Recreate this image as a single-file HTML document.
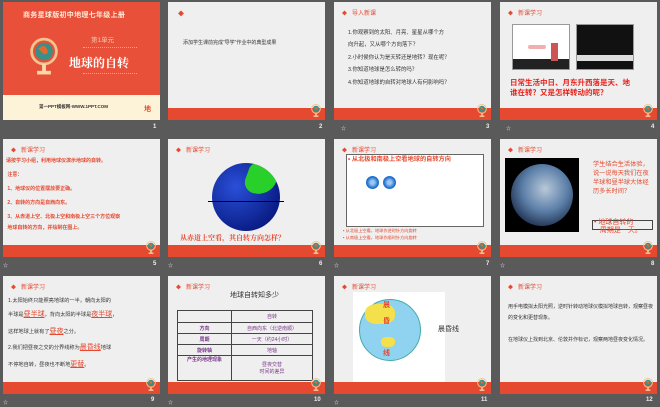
<!DOCTYPE html>
<html><head><meta charset="utf-8"><style>
*{margin:0;padding:0;box-sizing:border-box}
body{width:660px;height:407px;background:#5a5a5a;position:relative;overflow:hidden;font-family:"Liberation Sans","Noto Sans CJK SC",sans-serif}
.s{position:absolute;width:157px;height:118px;background:#efefef;overflow:hidden}
.f{position:absolute;left:0;right:0;bottom:0;height:12px;background:#e5492f}
.h{position:absolute;left:8px;top:6px;font-size:6px;color:#e5492f}
.h:before{content:"◆";margin-right:5px;font-size:5px}
.n{position:absolute;color:#eee;font-size:6px;font-weight:bold}
.t{position:absolute;font-size:5.5px;line-height:1.9}
.g{position:absolute;right:4px;bottom:3px}
.st{position:absolute;color:#ddd;font-size:5px}
</style></head><body>
<svg width="0" height="0" style="position:absolute"><defs><g id="gl"><circle cx="5" cy="6" r="4.5" fill="none" stroke="#f1c490" stroke-width="1"/><circle cx="5" cy="6" r="3.2" fill="#3a8f86"/><path d="M3 5q2-2 3 0t-1 2z" fill="#e5692f"/><rect x="4.3" y="10.5" width="1.4" height="3" fill="#f5d9a8"/><rect x="2.5" y="13" width="5" height="1.3" fill="#f5d9a8"/></g></defs></svg>

<!-- slide 1 -->
<div class="s" style="left:3px;top:2px;background:#e8503a">
<div style="position:absolute;left:0;right:0;bottom:0;height:25px;background:#fdf3d8"></div>
<div style="position:absolute;left:20px;top:8px;color:#fde9d6;font-size:7px;font-weight:bold;letter-spacing:.3px">商务星球版初中地理七年级上册</div>
<svg style="position:absolute;left:26px;top:33px" width="30" height="40" viewBox="0 0 10 14.5"><use href="#gl"/></svg>
<div style="position:absolute;left:88px;top:32px;color:#f7c7ae;font-size:6.5px">第1单元</div>
<div style="position:absolute;left:80px;top:45px;width:54px;border-top:1px dotted #f3a48e"></div>
<div style="position:absolute;left:66px;top:52px;color:#fff;font-size:12px;font-weight:bold;font-family:'Noto Serif CJK SC',serif">地球的自转</div>
<div style="position:absolute;left:80px;top:71px;width:54px;border-top:1px dotted #f3a48e"></div>
<div style="position:absolute;left:36px;top:102px;font-size:4.5px;font-weight:bold;color:#333">第一PPT模板网-WWW.1PPT.COM</div>
<div style="position:absolute;left:141px;top:102px;font-size:7px;color:#e5492f;font-weight:bold">地</div>
</div>
<div class="n" style="left:153px;top:124px">1</div>

<!-- slide 2 -->
<div class="s" style="left:168px;top:2px">
<div style="position:absolute;left:10px;top:7px;color:#e5492f;font-size:6px">◆</div>
<div class="t" style="left:15px;top:37px;color:#333;font-size:5px">添加学生课前完成“导学”作业中的典型成果</div>
<div class="f"></div><svg class="g" width="10" height="14" viewBox="0 0 10 14.5"><use href="#gl"/></svg>
</div>
<div class="n" style="left:319px;top:124px">2</div>

<!-- slide 3 -->
<div class="s" style="left:334px;top:2px">
<div class="h">导入新课</div>
<div class="t" style="left:14px;top:25px;color:#333;font-size:5.4px;line-height:12.4px">1.你观察到的太阳、月亮、星星从哪个方<br>向升起，又从哪个方向落下？<br>2.小时侯你认为是天转还是地转？现在呢？<br>3.你知道地球是怎么转的吗？<br>4.你知道地球的自转对地球人有何影响吗？</div>
<div class="f"></div><svg class="g" width="10" height="14" viewBox="0 0 10 14.5"><use href="#gl"/></svg>
</div>
<div class="n" style="left:486px;top:124px">3</div>
<div class="st" style="left:341px;top:125px">☆</div>

<!-- slide 4 -->
<div class="s" style="left:500px;top:2px">
<div class="h">新课学习</div>
<div style="position:absolute;left:12px;top:22px;width:58px;height:46px;background:#fff;border:1px solid #999">
<div style="position:absolute;left:0;right:0;bottom:0;height:10px;background:#222"></div>
<div style="position:absolute;left:38px;top:18px;width:7px;height:18px;background:#c55"></div>
<div style="position:absolute;left:15px;top:20px;width:18px;height:4px;background:#f0b0b0;border-radius:3px"></div></div>
<div style="position:absolute;left:76px;top:22px;width:58px;height:46px;background:#111;border:1px solid #999">
<div style="position:absolute;left:0;right:0;bottom:8px;height:6px;background:#ddd"></div></div>
<div style="position:absolute;left:10px;top:76px;color:#e8201a;font-size:7.5px;font-weight:bold;line-height:1.35;width:150px">日常生活中日、月东升西落是天、地<br>谁在转？又是怎样转动的呢？</div>
<div class="f"></div><svg class="g" width="10" height="14" viewBox="0 0 10 14.5"><use href="#gl"/></svg>
</div>
<div class="n" style="left:651px;top:124px">4</div>
<div class="st" style="left:506px;top:125px">☆</div>

<!-- slide 5 -->
<div class="s" style="left:3px;top:139px">
<div class="h">新课学习</div>
<div class="t" style="left:3px;top:15px;color:#e5492f;font-size:5px;font-weight:bold;line-height:14px">请按学习小组，利用地球仪演示地球的自转。<br>&nbsp;注意：<br>&nbsp;1、地球仪的位置摆放要正确。<br>&nbsp;2、自转的方向是自西向东。<br>&nbsp;3、从赤道上空、北极上空和南极上空三个方位观察</div>
<div class="t" style="left:3px;top:82px;color:#e5492f;font-size:5px;font-weight:bold;line-height:14px">&nbsp;地球自转的方向，并绘制在图上。</div>
<div class="f"></div><svg class="g" width="10" height="14" viewBox="0 0 10 14.5"><use href="#gl"/></svg>
</div>
<div class="n" style="left:153px;top:261px">5</div>
<div class="st" style="left:3px;top:262px">☆</div>

<!-- slide 6 -->
<div class="s" style="left:168px;top:139px">
<div class="h">新课学习</div>
<div style="position:absolute;left:44px;top:24px;width:68px;height:68px;border-radius:50%;background:radial-gradient(circle at 35% 35%,#2a4fd8,#0b1f8a 70%,#061060);overflow:hidden">
<div style="position:absolute;left:34px;top:2px;width:30px;height:30px;background:#2ad02a;border-radius:30% 10% 70% 40%;transform:rotate(20deg)"></div></div>
<div style="position:absolute;left:40px;top:62px;width:76px;height:1px;background:#000"></div>
<div style="position:absolute;left:12px;top:94px;color:#e5492f;font-size:7px;font-weight:bold;font-family:'Noto Serif CJK SC',serif">从赤道上空看，其自转方向怎样？</div>
<div class="f"></div><svg class="g" width="10" height="14" viewBox="0 0 10 14.5"><use href="#gl"/></svg>
</div>
<div class="n" style="left:319px;top:261px">6</div>
<div class="st" style="left:168px;top:262px">☆</div>

<!-- slide 7 -->
<div class="s" style="left:334px;top:139px">
<div class="h">新课学习</div>
<div style="position:absolute;left:12px;top:15px;width:138px;height:73px;background:#fff;border:1px solid #666"></div>
<div style="position:absolute;left:14px;top:15px;color:#e5492f;font-size:6.2px;font-weight:bold">• 从北极和南极上空看地球的自转方向</div>
<div style="position:absolute;left:32px;top:37px;width:13px;height:13px;border-radius:50%;background:radial-gradient(circle,#9cc8f0 20%,#1f6fd0 60%)"></div>
<div style="position:absolute;left:49px;top:37px;width:13px;height:13px;border-radius:50%;background:radial-gradient(circle,#9cc8f0 20%,#1f6fd0 60%)"></div>
<div class="t" style="left:9px;top:89px;color:#e5492f;font-size:4.2px;line-height:1.6">▪ 从北极上空看，地球作逆时针方向旋转<br>▪ 从南极上空看，地球作顺时针方向旋转</div>
<div class="f"></div><svg class="g" width="10" height="14" viewBox="0 0 10 14.5"><use href="#gl"/></svg>
</div>
<div class="n" style="left:486px;top:261px">7</div>
<div class="st" style="left:334px;top:262px">☆</div>

<!-- slide 8 -->
<div class="s" style="left:500px;top:139px">
<div class="h">新课学习</div>
<div style="position:absolute;left:5px;top:19px;width:74px;height:74px;background:#000">
<div style="position:absolute;left:6px;top:6px;width:62px;height:62px;border-radius:50%;background:radial-gradient(circle at 55% 40%,#b8c8d8,#5b7ea8 45%,#1d2d4a 80%)"></div></div>
<div style="position:absolute;left:93px;top:22px;color:#e5492f;font-size:6.2px;line-height:1.45;width:60px">学生结合生活体验，说一说每天我们在夜半球和昼半球大体经历多长时间？</div>
<div style="position:absolute;left:92px;top:81px;width:61px;height:10px;border:1px solid #444"></div>
<div style="position:absolute;left:94px;top:80px;color:#e5492f;font-size:7px;line-height:8px">• 地球自转的<br>&nbsp;&nbsp;&nbsp;周期是一天。</div>
<div class="f"></div><svg class="g" width="10" height="14" viewBox="0 0 10 14.5"><use href="#gl"/></svg>
</div>
<div class="n" style="left:651px;top:261px">8</div>
<div class="st" style="left:500px;top:262px">☆</div>

<!-- slide 9 -->
<div class="s" style="left:3px;top:276px">
<div class="h">新课学习</div>
<div class="t" style="left:5px;top:19px;color:#333;font-size:5.2px;line-height:2.35">1.太阳始终只能照亮地球的一半，朝向太阳的<br>半球是<u style="color:#e5492f;font-size:7px">昼半球</u>，背向太阳的半球是<u style="color:#e5492f;font-size:7px">夜半球</u>，<br>这样地球上就有了<u style="color:#e5492f;font-size:7px">昼夜</u>之分。<br>2.我们把昼夜之交的分界线称为<u style="color:#e5492f;font-size:7px">晨昏线</u>地球<br>不停地自转，昼夜也不断地<u style="color:#e5492f;font-size:7px">更替</u>。</div>
<div class="f"></div><svg class="g" width="10" height="14" viewBox="0 0 10 14.5"><use href="#gl"/></svg>
</div>
<div class="n" style="left:151px;top:397px">9</div>
<div class="st" style="left:3px;top:399px">☆</div>

<!-- slide 10 -->
<div class="s" style="left:168px;top:276px">
<div class="h">新课学习</div>
<div style="position:absolute;left:62px;top:14px;color:#333;font-size:7px">地球自转知多少</div>
<table style="position:absolute;left:9px;top:34px;width:136px;border-collapse:collapse;font-size:5px;color:#7a3a8a;text-align:center">
<tr style="height:12px"><td style="border:1px solid #444;width:54px"></td><td style="border:1px solid #444">自转</td></tr>
<tr style="height:11px"><td style="border:1px solid #444;font-weight:bold">方向</td><td style="border:1px solid #444">自西向东（北逆南顺）</td></tr>
<tr style="height:11px"><td style="border:1px solid #444;font-weight:bold">周期</td><td style="border:1px solid #444">一天（约24小时）</td></tr>
<tr style="height:11px"><td style="border:1px solid #444;font-weight:bold">旋转轴</td><td style="border:1px solid #444">地轴</td></tr>
<tr style="height:25px"><td style="border:1px solid #444;font-weight:bold;vertical-align:top">产生的地理现象</td><td style="border:1px solid #444">昼夜交替<br>时间的差异</td></tr>
</table>
<div class="f"></div><svg class="g" width="10" height="14" viewBox="0 0 10 14.5"><use href="#gl"/></svg>
</div>
<div class="n" style="left:314px;top:397px">10</div>
<div class="st" style="left:168px;top:399px">☆</div>

<!-- slide 11 -->
<div class="s" style="left:334px;top:276px">
<div class="h">新课学习</div>
<div style="position:absolute;left:19px;top:16px;width:92px;height:90px;background:#fff">
<div style="position:absolute;left:6px;top:7px;width:62px;height:62px;border-radius:50%;background:#8fd3f0;border:1px solid #4aa"></div>
<div style="position:absolute;left:12px;top:12px;width:30px;height:20px;background:#f3e04a;border-radius:40%"></div>
<div style="position:absolute;left:28px;top:45px;width:14px;height:10px;background:#f3e04a;border-radius:40%"></div>
<div style="position:absolute;left:30px;top:6px;color:#e5492f;font-size:7px;font-weight:bold;line-height:2.3">晨<br>昏<br><br>线</div>
</div>
<div style="position:absolute;left:104px;top:48px;color:#333;font-size:7px">晨昏线</div>
<div class="f"></div><svg class="g" width="10" height="14" viewBox="0 0 10 14.5"><use href="#gl"/></svg>
</div>
<div class="n" style="left:481px;top:397px">11</div>
<div class="st" style="left:334px;top:399px">☆</div>

<!-- slide 12 -->
<div class="s" style="left:500px;top:276px">
<div class="h">新课学习</div>
<div class="t" style="left:8px;top:26px;color:#333;font-size:5px;line-height:2.2;width:146px">用手电模拟太阳光照，逆时针转动地球仪模拟地球自转，观察昼夜的变化和更替现象。<br><br>在地球仪上找到北京、伦敦并作标记，观察两地昼夜变化情况。</div>
<div class="f"></div><svg class="g" width="10" height="14" viewBox="0 0 10 14.5"><use href="#gl"/></svg>
</div>
<div class="n" style="left:646px;top:397px">12</div>
</body></html>
